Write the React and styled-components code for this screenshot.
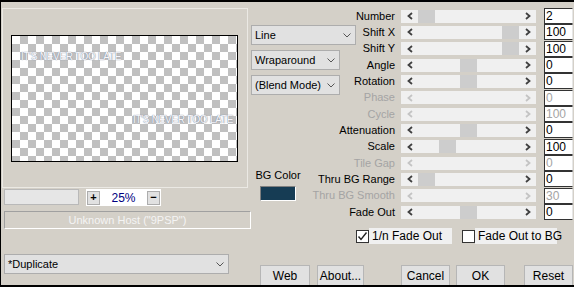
import React from 'react'
import styled, { createGlobalStyle } from 'styled-components'

const GlobalStyle = createGlobalStyle`
  html, body { margin: 0; padding: 0; background: #d4d0c8; }
  body { font-family: "Liberation Sans", Arial, sans-serif; font-size: 11px; color: #000; }
  * { box-sizing: border-box; }
`

const Dialog = styled.div`
  width: 574px;
  height: 287px;
  display: flex;
  background: #d4d0c8;
  border-top: 2px solid #000;
  border-left: 1px solid #000;
  border-bottom: 2px solid #000;
  overflow: hidden;
`

const LeftCol = styled.div`
  width: 250px;
  display: flex;
  flex-direction: column;
`

const GroupBox = styled.div`
  margin: 6px 0 0 1px;
  width: 246px;
  height: 180px;
  border: 1px solid #ebe9e4;
  padding: 26px 0 0 8px;
`

const Canvas = styled.div`
  width: 227px;
  height: 127px;
  border: 1px solid #000;
  background: conic-gradient(#c0c0c0 90deg, #fff 90deg 180deg, #c0c0c0 180deg 270deg, #fff 270deg);
  background-size: 16px 16px;
  display: flex;
  flex-direction: column;
  align-items: flex-start;
  padding: 15px 0 0 9px;
`

const Caption = styled.span`
  font-size: 10px;
  line-height: 11px;
  letter-spacing: -0.3px;
  color: #f6f6fa;
  text-shadow: 0 0 1px #8a93a6, 0 0 1px #8a93a6;
  margin-left: ${p => p.$x || 0}px;
  margin-top: ${p => p.$y || 0}px;
  white-space: nowrap;
`

const ZoomRow = styled.div`
  margin: 1px 0 0 3px;
  display: flex;
  gap: 7px;
  align-items: flex-start;
`

const Progress = styled.div`
  width: 75px;
  height: 16px;
  background: #e6e6e6;
  border: 1px solid #b9b9b9;
`

const ZoomBox = styled.div`
  width: 75px;
  height: 17px;
  background: #fff;
  display: flex;
  align-items: center;
  padding: 0 1px;
`

const ZoomBtn = styled.div`
  width: 13px;
  height: 14px;
  background: #e1e1e1;
  border: 1px solid #adadad;
  display: flex;
  align-items: center;
  justify-content: center;
  font-weight: bold;
  font-size: 11px;
  line-height: 1;
`

const ZoomValue = styled.div`
  flex: 1;
  text-align: center;
  color: #000080;
  font-size: 12px;
`

const HostLabel = styled.div`
  margin: 5px 0 0 3px;
  width: 247px;
  height: 18px;
  border: 1px solid;
  border-color: #a0a0a0 #fff #fff #a0a0a0;
  text-align: center;
  color: #f4f4f4;
  line-height: 16px;
`

const Select = styled.div`
  width: ${p => p.$w}px;
  height: 20px;
  margin: ${p => p.$m || '0'};
  background: #e1e1e1;
  border: 1px solid #adadad;
  display: flex;
  align-items: center;
  justify-content: space-between;
  padding: 0 4px 0 3px;
  white-space: nowrap;
`

const RightCol = styled.div`
  flex: 1;
  display: flex;
  flex-direction: column;
`

const ParamGrid = styled.div`
  margin-top: 6px;
  display: grid;
  grid-template-columns: 144px 135px 31px;
  grid-template-rows: repeat(13, 16.33px);
  column-gap: 6px;
`

const Middle = styled.div`
  grid-column: 1;
  grid-row: 2 / 14;
  align-self: start;
  justify-self: start;
  display: flex;
  flex-direction: column;
  gap: 5px;
  padding-top: 1px;
`

const BGGroup = styled.div`
  margin: 69px 0 0 5px;
  width: 44px;
  display: flex;
  flex-direction: column;
  align-items: center;
  gap: 4px;
  line-height: 13px;
  white-space: nowrap;
`

const Swatch = styled.div`
  width: 36px;
  height: 15px;
  background: #163c54;
  border: 1px solid;
  border-color: #808080 #fff #fff #808080;
`

const Label = styled.div`
  grid-column: 1;
  grid-row: ${p => p.$row};
  justify-self: end;
  align-self: center;
  white-space: nowrap;
  line-height: 13px;
  color: ${p => (p.$off ? '#a4a4a4' : '#000')};
`

const Slider = styled.div`
  grid-column: 2;
  grid-row: ${p => p.$row};
  align-self: center;
  height: 13px;
  background: #f0f0f0;
  display: flex;
  align-items: center;
`

const Arrow = styled.div`
  width: 17px;
  height: 13px;
  display: flex;
  align-items: center;
  justify-content: center;
`

const Track = styled.div`
  flex: 1;
  height: 13px;
`

const Thumb = styled.div`
  width: 17px;
  height: 13px;
  background: #cdcdcd;
  margin-left: calc(${p => p.$f} * (100% - 17px));
`

const Value = styled.div`
  grid-column: 3;
  grid-row: ${p => p.$row};
  justify-self: end;
  align-self: center;
  width: 29px;
  height: 16px;
  background: #fff;
  border: 1px solid #333;
  border-right-color: #e6e6e6;
  padding-left: 1px;
  line-height: 14px;
  font-size: 12px;
  color: ${p => (p.$off ? '#a4a4a4' : '#000')};
`

const CheckRow = styled.div`
  margin: 8px 0 0 105px;
  display: flex;
  gap: 10px;
`

const CheckItem = styled.div`
  display: flex;
  align-items: center;
  height: 16px;
`

const Box = styled.div`
  width: 13px;
  height: 13px;
  background: #fff;
  border: 1px solid #333;
  display: flex;
  align-items: center;
  justify-content: center;
`

const CheckLabel = styled.div`
  width: ${p => p.$w}px;
  height: 16px;
  background: #f0f0f0;
  padding-left: 3px;
  line-height: 16px;
  font-size: 12px;
  white-space: nowrap;
`

const ButtonRow = styled.div`
  margin-top: 21px;
  display: flex;
  padding-left: 9px;
`

const Button = styled.div`
  width: ${p => p.$w}px;
  margin-left: ${p => p.$ml || 0}px;
  height: 22px;
  flex: none;
  background: #e1e1e1;
  border: 1px solid #b6b6b6;
  text-align: center;
  line-height: 20px;
  font-size: 12px;
`

const Chevron = () => (
  <svg width="8" height="5" viewBox="0 0 8 5">
    <polyline points="0.5,0.5 4,4 7.5,0.5" fill="none" stroke="#555" strokeWidth="1" />
  </svg>
)

const ArrowIcon = ({ dir, off }) => (
  <svg width="6" height="8" viewBox="0 0 6 8">
    <polyline
      points={dir === 'left' ? '5,1 1.5,4 5,7' : '1,1 4.5,4 1,7'}
      fill="none"
      stroke={off ? '#c4c4c4' : '#404040'}
      strokeWidth="1.8"
    />
  </svg>
)

const params = [
  { name: 'Number', value: '2', f: 0 },
  { name: 'Shift X', value: '100', f: 1 },
  { name: 'Shift Y', value: '100', f: 1 },
  { name: 'Angle', value: '0', f: 0.5 },
  { name: 'Rotation', value: '0', f: 0.5 },
  { name: 'Phase', value: '0', off: true },
  { name: 'Cycle', value: '100', off: true },
  { name: 'Attenuation', value: '0', f: 0.5 },
  { name: 'Scale', value: '100', f: 0.25 },
  { name: 'Tile Gap', value: '0', off: true },
  { name: 'Thru BG Range', value: '0', f: 0 },
  { name: 'Thru BG Smooth', value: '30', off: true },
  { name: 'Fade Out', value: '0', f: 0.5 },
]

export default function App() {
  return (
    <>
      <GlobalStyle />
      <Dialog>
        <LeftCol>
          <GroupBox>
            <Canvas>
              <Caption>IT'S NEVER TOO LATE</Caption>
              <Caption $x={112} $y={52}>IT'S NEVER TOO LATE</Caption>
            </Canvas>
          </GroupBox>
          <ZoomRow>
            <Progress />
            <ZoomBox>
              <ZoomBtn>+</ZoomBtn>
              <ZoomValue>25%</ZoomValue>
              <ZoomBtn>−</ZoomBtn>
            </ZoomBox>
          </ZoomRow>
          <HostLabel>Unknown Host ("9PSP")</HostLabel>
          <Select $w={225} $m="25px 0 0 3px">
            <span>*Duplicate</span>
            <Chevron />
          </Select>
        </LeftCol>

        <RightCol>
          <ParamGrid>
            <Middle>
              <Select $w={105}><span>Line</span><Chevron /></Select>
              <Select $w={89}><span>Wraparound</span><Chevron /></Select>
              <Select $w={89}><span>(Blend Mode)</span><Chevron /></Select>
              <BGGroup>
                <span>BG Color</span>
                <Swatch />
              </BGGroup>
            </Middle>
            {params.map((p, i) => (
              <React.Fragment key={p.name}>
                <Label $row={i + 1} $off={p.off}>{p.name}</Label>
                <Slider $row={i + 1}>
                  <Arrow><ArrowIcon dir="left" off={p.off} /></Arrow>
                  <Track>{!p.off && <Thumb $f={p.f} />}</Track>
                  <Arrow><ArrowIcon dir="right" off={p.off} /></Arrow>
                </Slider>
                <Value $row={i + 1} $off={p.off}>{p.value}</Value>
              </React.Fragment>
            ))}
          </ParamGrid>

          <CheckRow>
            <CheckItem>
              <Box>
                <svg width="11" height="11" viewBox="0 0 11 11">
                  <polyline points="1.5,5.5 4,8.5 9.5,1.5" fill="none" stroke="#222" strokeWidth="1.4" />
                </svg>
              </Box>
              <CheckLabel $w={83}>1/n Fade Out</CheckLabel>
            </CheckItem>
            <CheckItem>
              <Box />
              <CheckLabel $w={82}>Fade Out to BG</CheckLabel>
            </CheckItem>
          </CheckRow>

          <ButtonRow>
            <Button $w={50}>Web</Button>
            <Button $w={47} $ml={7}>About...</Button>
            <Button $w={49} $ml={37}>Cancel</Button>
            <Button $w={49} $ml={6}>OK</Button>
            <Button $w={49} $ml={19}>Reset</Button>
          </ButtonRow>
        </RightCol>
      </Dialog>
    </>
  )
}
